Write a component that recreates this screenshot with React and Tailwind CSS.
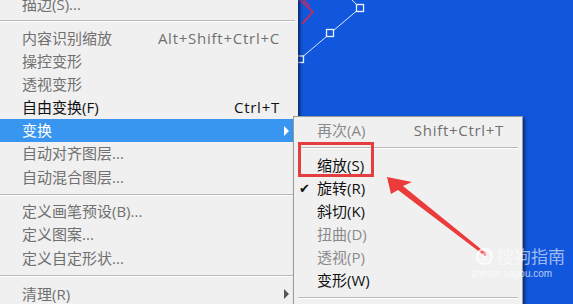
import React from "react";

const F = { fontFamily: '"Open Sans", "Noto Sans CJK SC", sans-serif' };

function Row({ label, shortcut, disabled, arrow, h = "h-[23px]", highlight }) {
  return (
    <div
      className={`${h} shrink-0 flex items-center pl-[22px] pr-[18px] relative ${
        highlight ? "bg-[#3896f0] text-white" : disabled ? "text-[#707070]" : "text-[#111]"
      }`}
    >
      <span className="flex-1 whitespace-nowrap">{label}</span>
      {shortcut && <span className="whitespace-nowrap tracking-[0.75px]">{shortcut}</span>}
      {arrow && (
        <span
          className={`absolute right-[9px] top-1/2 -translate-y-1/2 w-0 h-0 border-y-[5px] border-y-transparent border-l-[5px] ${
            highlight ? "border-l-white" : "border-l-[#555]"
          }`}
        />
      )}
    </div>
  );
}

function Sep({ h = "h-[11px]", pt = "pt-[4px]" }) {
  return (
    <div className={`${h} ${pt} shrink-0`}>
      <div className="border-t border-[#b8b8b8] border-b border-b-white mr-[3px]" />
    </div>
  );
}

function SubRow({ label, shortcut, disabled, checked }) {
  return (
    <div
      className={`h-[23px] shrink-0 flex items-center pl-[23px] pr-[18px] relative ${
        disabled ? "text-[#8a8a8a]" : "text-[#111]"
      }`}
    >
      {checked && (
        <span className="absolute left-[5px] top-[5px] text-[13px] leading-none">✔</span>
      )}
      <span className="flex-1 whitespace-nowrap">{label}</span>
      {shortcut && <span className="whitespace-nowrap tracking-[0.7px] text-[#707070]">{shortcut}</span>}
    </div>
  );
}

export default function App() {
  return (
    <div
      className="relative w-[573px] h-[304px] overflow-hidden flex bg-[#1157dd] text-[15px] leading-none"
      style={F}
    >
      {/* main menu */}
      <div className="w-[298px] h-full bg-[#f0f0f0] shadow-[2px_0_3px_rgba(0,0,0,0.55)] flex flex-col z-10 shrink-0">
        <div className="-mt-[7px] flex flex-col">
          <Row label="描边(S)..." disabled />
          <Sep />
          <Row label="内容识别缩放" shortcut="Alt+Shift+Ctrl+C" disabled />
          <Row label="操控变形" disabled />
          <Row label="透视变形" disabled />
          <Row label="自由变换(F)" shortcut="Ctrl+T" />
          <Row label="变换" arrow highlight />
          <Row label="自动对齐图层..." disabled h="h-[23.4px]" />
          <Row label="自动混合图层..." disabled h="h-[23.4px]" />
          <Sep h="h-[11px]" pt="pt-[5px]" />
          <Row label="定义画笔预设(B)..." disabled h="h-[23.4px]" />
          <Row label="定义图案..." disabled h="h-[23.4px]" />
          <Row label="定义自定形状..." disabled h="h-[23.4px]" />
          <Sep h="h-[13px]" pt="pt-[5px]" />
          <Row label="清理(R)" disabled arrow />
        </div>
      </div>

      {/* canvas */}
      <div className="flex-1 relative">
        <svg className="absolute left-0 top-0" width="100" height="70" viewBox="298 0 100 70">
          <polyline points="300,0 313,12 302,24" fill="none" stroke="#b03070" strokeWidth="2" />
          <polyline points="304,0 310,6" fill="none" stroke="#b03070" strokeWidth="1.5" />
          <line x1="352" y1="0" x2="360" y2="8" stroke="#dfe8ff" strokeWidth="1" />
          <line x1="360" y1="8" x2="300" y2="59" stroke="#dfe8ff" strokeWidth="1" />
          <rect x="356.5" y="4.5" width="7" height="7" fill="#1157dd" stroke="#eef3ff" strokeWidth="1.3" />
          <rect x="326.5" y="29.5" width="7" height="7" fill="#1157dd" stroke="#eef3ff" strokeWidth="1.3" />
          <rect x="297.5" y="56" width="6" height="6.5" fill="#1157dd" stroke="#eef3ff" strokeWidth="1.3" />
        </svg>
      </div>

      {/* submenu */}
      <div className="absolute left-[293px] top-[116px] w-[230px] h-[200px] bg-[#f0f0f0] border border-[#9a9a9a] shadow-[2px_2px_3px_rgba(0,0,0,0.5)] z-20 pt-[2px] flex flex-col">
        <SubRow label="再次(A)" shortcut="Shift+Ctrl+T" disabled />
        <div className="h-[12px] pt-[5px] shrink-0 px-[4px]">
          <div className="border-t border-[#b8b8b8] border-b border-b-white" />
        </div>
        <SubRow label="缩放(S)" />
        <SubRow label="旋转(R)" checked />
        <SubRow label="斜切(K)" />
        <SubRow label="扭曲(D)" disabled />
        <SubRow label="透视(P)" disabled />
        <SubRow label="变形(W)" />
        <div className="h-[12px] pt-[5px] shrink-0 px-[4px]">
          <div className="border-t border-[#b8b8b8] border-b border-b-white" />
        </div>
      </div>

      {/* red highlight box */}
      <div className="absolute left-[298px] top-[142px] w-[76px] h-[35px] border-[3px] border-[#e53e3e] z-30" />

      {/* red arrow */}
      <svg className="absolute left-0 top-0 z-30 pointer-events-none" width="573" height="304">
        <polygon points="387,177 412,182 403,186 487,254 485,256 398,190 391,194" fill="#ec3b3b" />
      </svg>

      {/* watermark */}
      <div className="absolute left-[476px] top-[248px] z-40 flex items-center gap-[4px] text-white/60">
        <span className="w-[17px] h-[17px] rounded-full border-[2px] border-white/70 bg-white/20 flex items-center justify-center text-[11px] font-bold">S</span>
        <span className="text-[17px]">搜狗指南</span>
      </div>
      <div
        className="absolute left-[471px] top-[269px] z-40 text-[10px] text-white/70"
        style={{ fontFamily: '"Liberation Sans", sans-serif' }}
      >
        zhinan.sogou.com
      </div>
    </div>
  );
}
